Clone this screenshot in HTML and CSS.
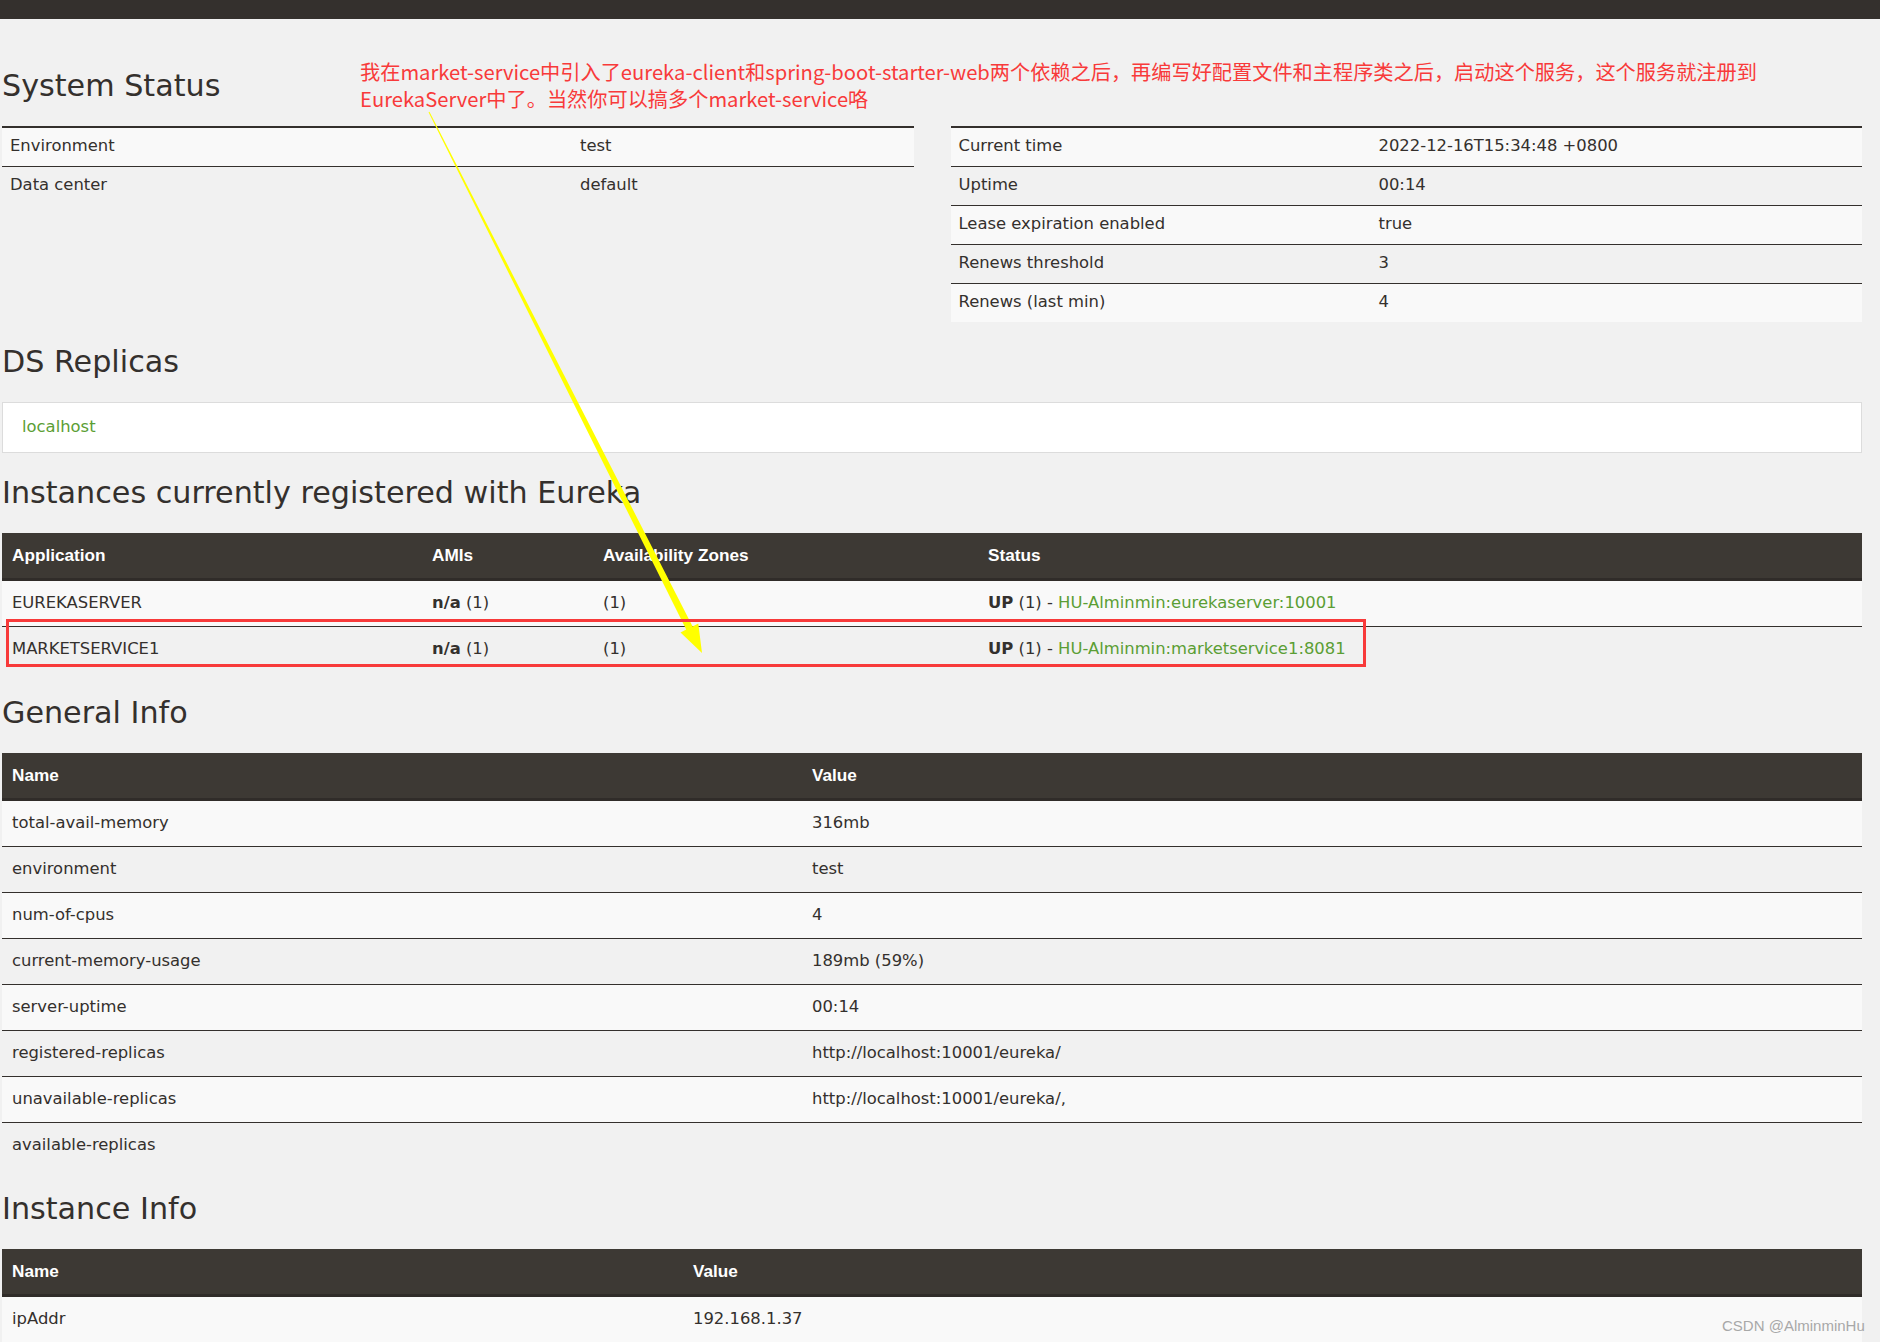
FILE: index.html
```html
<!DOCTYPE html>
<html lang="zh-CN">
<head>
<meta charset="utf-8">
<title>Eureka</title>
<link rel="stylesheet" href="styles.css">
</head>
<body>
<div class="navbar"></div>
<div class="container">
  <h2 class="first">System Status</h2>
  <div class="status-row">
    <div class="kv kv-left">
      <div class="r"><span>Environment</span><span>test</span></div>
      <div class="r"><span>Data center</span><span>default</span></div>
    </div>
    <div class="kv kv-right">
      <div class="r"><span>Current time</span><span>2022-12-16T15:34:48 +0800</span></div>
      <div class="r"><span>Uptime</span><span>00:14</span></div>
      <div class="r"><span>Lease expiration enabled</span><span>true</span></div>
      <div class="r"><span>Renews threshold</span><span>3</span></div>
      <div class="r"><span>Renews (last min)</span><span>4</span></div>
    </div>
  </div>

  <h2>DS Replicas</h2>
  <div class="replicas"><a href="#">localhost</a></div>

  <h2>Instances currently registered with Eureka</h2>
  <div class="dt dt-inst">
    <div class="hd"><span>Application</span><span>AMIs</span><span>Availability Zones</span><span>Status</span></div>
    <div class="r"><span>EUREKASERVER</span><span><b>n/a</b> (1)</span><span>(1)</span><span><b>UP</b> (1) - <a href="#">HU-Alminmin:eurekaserver:10001</a></span></div>
    <div class="r"><span>MARKETSERVICE1</span><span><b>n/a</b> (1)</span><span>(1)</span><span><b>UP</b> (1) - <a href="#">HU-Alminmin:marketservice1:8081</a></span></div>
  </div>

  <h2>General Info</h2>
  <div class="dt dt-gen">
    <div class="hd"><span>Name</span><span>Value</span></div>
    <div class="r"><span>total-avail-memory</span><span>316mb</span></div>
    <div class="r"><span>environment</span><span>test</span></div>
    <div class="r"><span>num-of-cpus</span><span>4</span></div>
    <div class="r"><span>current-memory-usage</span><span>189mb (59%)</span></div>
    <div class="r"><span>server-uptime</span><span>00:14</span></div>
    <div class="r"><span>registered-replicas</span><span>http://localhost:10001/eureka/</span></div>
    <div class="r"><span>unavailable-replicas</span><span>http://localhost:10001/eureka/,</span></div>
    <div class="r"><span>available-replicas</span><span></span></div>
  </div>

  <h2>Instance Info</h2>
  <div class="dt dt-info">
    <div class="hd"><span>Name</span><span>Value</span></div>
    <div class="r"><span>ipAddr</span><span>192.168.1.37</span></div>
  </div>
</div>

<div class="note">我在market-service中引入了eureka-client和spring-boot-starter-web两个依赖之后，再编写好配置文件和主程序类之后，启动这个服务，这个服务就注册到<br>EurekaServer中了。当然你可以搞多个market-service咯</div>

<svg class="overlay" width="1880" height="1342" viewBox="0 0 1880 1342">
  <polygon fill="#ffff00" points="429.45,111.8 692.6,626.4 698.3,623.5 702,653 680.5,632.5 686.2,629.6 428.55,112.2"/>
  <rect x="7.5" y="620.5" width="1357" height="45" fill="none" stroke="#f83a3a" stroke-width="3"/>
</svg>

<div class="watermark">CSDN @AlminminHu</div>
</body>
</html>
```
FILE: styles.css
```css
html, body {
  margin: 0;
  padding: 0;
  overflow: hidden;
  height: 1342px;
}
body {
  background: #f1f1f1;
  color: #34302d;
  font-family: "DejaVu Sans", sans-serif;
  font-size: 16.4px;
  line-height: 20px;
  position: relative;
  width: 1880px;
}
.navbar {
  height: 19px;
  background: #34302d;
}
.container {
  padding: 0 18px 0 2px;
}
h2 {
  font-family: "DejaVu Sans", sans-serif;
  font-weight: normal;
  font-size: 30.2px;
  line-height: 30px;
  margin: 25px 0 25px;
  color: #34302d;
}
h2.first {
  margin-top: 52px;
}
a {
  color: #5b9e34;
  text-decoration: none;
}
b {
  font-weight: bold;
}

/* System status key/value tables */
.status-row {
  display: flex;
  gap: 37px;
  align-items: flex-start;
}
.kv {
  flex: 1;
  border-top: 2px solid #34302d;
}
.kv .r {
  display: grid;
  height: 39px;
  box-sizing: border-box;
  align-items: center;
  padding: 0 8px 3px;
  border-bottom: 1px solid #34302d;
}
.kv .r:last-child {
  border-bottom: 0;
  height: 38px;
}
.kv .r:nth-child(odd) {
  background: #f9f9f9;
}
.kv-left .r {
  grid-template-columns: 570px 1fr;
}
.kv-right .r {
  grid-template-columns: 420px 1fr;
}

/* DS replicas */
.replicas {
  height: 51px;
  box-sizing: border-box;
  background: #ffffff;
  border: 1px solid #dcdcdc;
  display: flex;
  align-items: center;
  padding: 0 0 2px 19px;
  margin-bottom: 2px;
}

/* Data tables */
.dt .hd {
  display: grid;
  height: 48px;
  box-sizing: border-box;
  align-items: center;
  background: #3d3934;
  border-bottom: 3px solid #302c29;
  color: #ffffff;
  font-family: "Liberation Sans", Arial, sans-serif;
  font-weight: bold;
  font-size: 17.2px;
  padding: 0 0 1px 10px;
}
.dt .r {
  display: grid;
  height: 46px;
  box-sizing: border-box;
  align-items: center;
  padding: 0 0 2px 10px;
  border-bottom: 1px solid #34302d;
}
.dt .r:nth-child(even) {
  background: #f9f9f9;
}
.dt .r:last-child {
  border-bottom-color: transparent;
}
.dt-inst .hd, .dt-inst .r {
  grid-template-columns: 420px 171px 385px 1fr;
}
.dt-gen .hd, .dt-gen .r {
  grid-template-columns: 800px 1fr;
}
.dt-gen {
  margin-bottom: 2px;
}
.dt-info .hd, .dt-info .r {
  grid-template-columns: 681px 1fr;
}

/* Annotations drawn over the screenshot */
.note {
  position: absolute;
  left: 360px;
  top: 58px;
  font-family: "Noto Sans CJK SC", "Liberation Sans", sans-serif;
  font-size: 20.2px;
  line-height: 27px;
  color: #f83a3a;
  white-space: nowrap;
}
.overlay {
  position: absolute;
  left: 0;
  top: 0;
  pointer-events: none;
}
.watermark {
  position: absolute;
  left: 1722px;
  top: 1317px;
  font-family: "Liberation Sans", Arial, sans-serif;
  font-size: 15px;
  line-height: 18px;
  color: #a8a8a8;
  white-space: nowrap;
}
```
